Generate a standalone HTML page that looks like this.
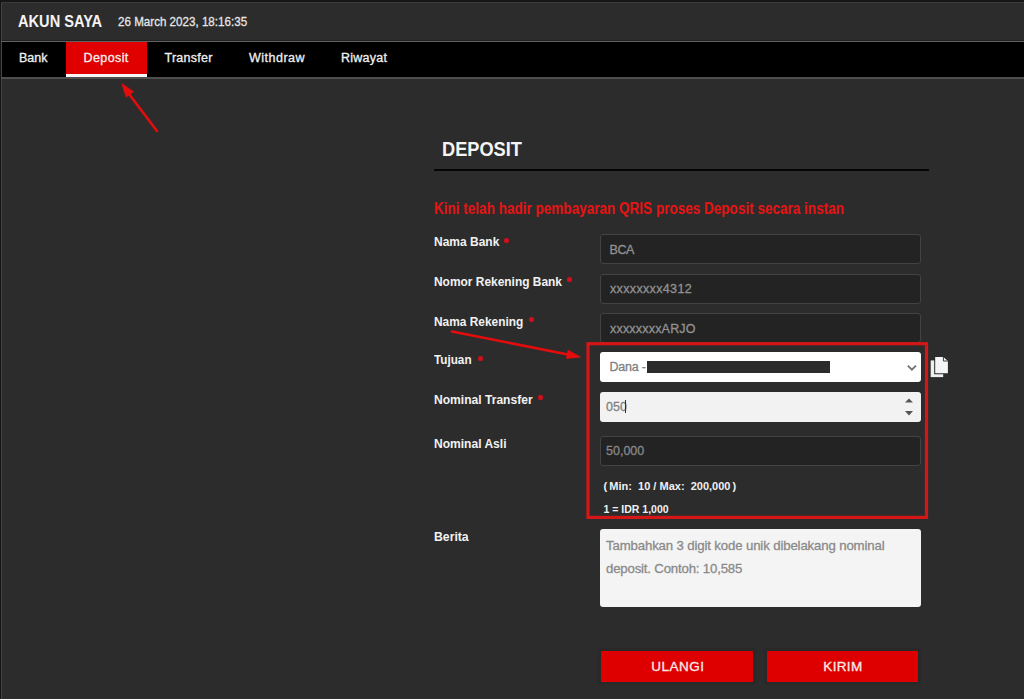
<!DOCTYPE html>
<html><head><meta charset="utf-8"><style>
html,body{margin:0;padding:0;width:1024px;height:699px;overflow:hidden;background:#2c2c2c;}
.t{position:absolute;white-space:pre;line-height:1;font-family:"Liberation Sans",sans-serif;}
.b{position:absolute;}
</style></head><body>
<div class="b" style="left:0px;top:0px;width:1024px;height:2px;background:#161616"></div>
<div class="b" style="left:0px;top:0px;width:1px;height:699px;background:#141414"></div>
<div class="b" style="left:1px;top:2px;width:1px;height:697px;background:#444"></div>
<div class="b" style="left:1px;top:2px;width:1023px;height:1px;background:#3a3a3a"></div>
<div class="t" style="left:18.30px;top:12.73px;font-size:16.5px;font-weight:bold;color:#f4f4f4;letter-spacing:0px;transform:scaleX(0.885);transform-origin:0 0;">AKUN SAYA</div>
<div class="t" style="left:118.00px;top:15.07px;font-size:13.5px;font-weight:normal;color:#e6e6e6;letter-spacing:0px;transform:scaleX(0.86);transform-origin:0 0;-webkit-text-stroke:0.3px #e6e6e6;">26 March 2023, 18:16:35</div>
<div class="b" style="left:2px;top:40px;width:1022px;height:1px;background:#1f1f1f"></div>
<div class="b" style="left:1px;top:41px;width:1023px;height:1px;background:#626262"></div>
<div class="b" style="left:2px;top:42px;width:1022px;height:35px;background:#000"></div>
<div class="b" style="left:66px;top:42px;width:81px;height:32px;background:#e00000"></div>
<div class="b" style="left:66px;top:74px;width:81px;height:3px;background:#f5f5f5"></div>
<div class="b" style="left:1px;top:77px;width:1023px;height:2px;background:#4e4e4e"></div>
<div class="t" style="left:19.00px;top:51.52px;font-size:12.5px;font-weight:normal;color:#f0f0f0;letter-spacing:0px;-webkit-text-stroke:0.3px #f0f0f0;">Bank</div>
<div class="t" style="left:83.50px;top:51.52px;font-size:12.5px;font-weight:normal;color:#f0f0f0;letter-spacing:0.4px;-webkit-text-stroke:0.3px #f0f0f0;">Deposit</div>
<div class="t" style="left:164.50px;top:51.52px;font-size:12.5px;font-weight:normal;color:#f0f0f0;letter-spacing:0.25px;-webkit-text-stroke:0.3px #f0f0f0;">Transfer</div>
<div class="t" style="left:249.00px;top:51.52px;font-size:12.5px;font-weight:normal;color:#f0f0f0;letter-spacing:0.5px;-webkit-text-stroke:0.3px #f0f0f0;">Withdraw</div>
<div class="t" style="left:341.00px;top:51.52px;font-size:12.5px;font-weight:normal;color:#f0f0f0;letter-spacing:0.25px;-webkit-text-stroke:0.3px #f0f0f0;">Riwayat</div>
<svg class="b" style="left:0;top:0" width="1024" height="699">
<g stroke="#e40c0c" stroke-width="2.6" stroke-linecap="round" fill="#e40c0c">
<line x1="157" y1="131" x2="129" y2="94"/>
<polygon points="122,84 126.15,97.12 133.37,91.74" stroke-width="0.8" stroke-linejoin="round"/>
<line x1="452" y1="331.5" x2="568" y2="354.5"/>
<polygon points="580,357 566.47,358.38 568.03,350.54" stroke-width="0.8" stroke-linejoin="round"/>
</g>
</svg>
<div class="t" style="left:441.50px;top:138.97px;font-size:20px;font-weight:bold;color:#f5f5f5;letter-spacing:0px;transform:scaleX(0.91);transform-origin:0 0;">DEPOSIT</div>
<div class="b" style="left:434px;top:169px;width:495px;height:2px;background:#050505"></div>
<div class="t" style="left:434.00px;top:200.76px;font-size:16px;font-weight:bold;color:#e61414;letter-spacing:0px;transform:scaleX(0.846);transform-origin:0 0;">Kini telah hadir pembayaran QRIS proses Deposit secara instan</div>
<div class="t" style="left:433.60px;top:235.29px;font-size:13.6px;font-weight:bold;color:#f2f2f2;letter-spacing:0px;transform:scaleX(0.882);transform-origin:0 0;">Nama Bank</div>
<div class="b" style="left:504.2px;top:237.5px;width:5px;height:5px;border-radius:50%;background:#c8121e;box-shadow:0 0 1px #a01018"></div>
<div class="t" style="left:433.60px;top:274.89px;font-size:13.6px;font-weight:bold;color:#f2f2f2;letter-spacing:0px;transform:scaleX(0.878);transform-origin:0 0;">Nomor Rekening Bank</div>
<div class="b" style="left:567.3px;top:277.09999999999997px;width:5px;height:5px;border-radius:50%;background:#c8121e;box-shadow:0 0 1px #a01018"></div>
<div class="t" style="left:433.60px;top:314.59px;font-size:13.6px;font-weight:bold;color:#f2f2f2;letter-spacing:0px;transform:scaleX(0.875);transform-origin:0 0;">Nama Rekening</div>
<div class="b" style="left:528.5px;top:316.8px;width:5px;height:5px;border-radius:50%;background:#c8121e;box-shadow:0 0 1px #a01018"></div>
<div class="t" style="left:433.60px;top:353.29px;font-size:13.6px;font-weight:bold;color:#f2f2f2;letter-spacing:0px;transform:scaleX(0.862);transform-origin:0 0;">Tujuan</div>
<div class="b" style="left:477.5px;top:355.5px;width:5px;height:5px;border-radius:50%;background:#c8121e;box-shadow:0 0 1px #a01018"></div>
<div class="t" style="left:433.60px;top:392.99px;font-size:13.6px;font-weight:bold;color:#f2f2f2;letter-spacing:0px;transform:scaleX(0.888);transform-origin:0 0;">Nominal Transfer</div>
<div class="b" style="left:538.3px;top:395.2px;width:5px;height:5px;border-radius:50%;background:#c8121e;box-shadow:0 0 1px #a01018"></div>
<div class="t" style="left:433.60px;top:437.09px;font-size:13.6px;font-weight:bold;color:#f2f2f2;letter-spacing:0px;transform:scaleX(0.886);transform-origin:0 0;">Nominal Asli</div>
<div class="t" style="left:433.60px;top:530.29px;font-size:13.6px;font-weight:bold;color:#f2f2f2;letter-spacing:0px;transform:scaleX(0.9);transform-origin:0 0;">Berita</div>
<div class="b" style="left:600px;top:234px;width:321px;height:30px;background:#232323;border:1px solid #434343;box-sizing:border-box;border-radius:3px"></div>
<div class="t" style="left:609.50px;top:243.62px;font-size:12.5px;font-weight:normal;color:#929292;letter-spacing:-0.4px;-webkit-text-stroke:0.3px #929292;">BCA</div>
<div class="b" style="left:600px;top:274px;width:321px;height:30px;background:#232323;border:1px solid #434343;box-sizing:border-box;border-radius:3px"></div>
<div class="t" style="left:610.00px;top:282.92px;font-size:12.5px;font-weight:normal;color:#929292;letter-spacing:0.35px;-webkit-text-stroke:0.3px #929292;">xxxxxxxx4312</div>
<div class="b" style="left:600px;top:313px;width:321px;height:30px;background:#232323;border:1px solid #434343;box-sizing:border-box;border-radius:3px"></div>
<div class="t" style="left:610.00px;top:323.02px;font-size:12.5px;font-weight:normal;color:#929292;letter-spacing:0.2px;-webkit-text-stroke:0.3px #929292;">xxxxxxxxARJO</div>
<div class="b" style="left:600px;top:352px;width:321px;height:30px;background:#fff;border-radius:3px"></div>
<div class="t" style="left:609.50px;top:360.92px;font-size:12.5px;font-weight:normal;color:#808080;letter-spacing:-0.2px;-webkit-text-stroke:0.3px #808080;">Dana -</div>
<div class="b" style="left:647px;top:361px;width:183px;height:11.5px;background:#2b2b2b"></div>
<svg class="b" style="left:906px;top:363.5px" width="12" height="8"><polyline points="1.8,1.6 5.9,5.6 10,1.6" fill="none" stroke="#747474" stroke-width="1.9"/></svg>
<div class="b" style="left:600px;top:392px;width:321px;height:30px;background:#f2f2f2;border-radius:3px"></div>
<div class="t" style="left:606.00px;top:401.02px;font-size:12.5px;font-weight:normal;color:#808080;letter-spacing:0px;-webkit-text-stroke:0.3px #808080;">050</div>
<div class="b" style="left:625px;top:400px;width:1px;height:13px;background:#333"></div>
<svg class="b" style="left:903px;top:396px" width="12" height="22"><polygon points="2,6.5 6,2.5 10,6.5" fill="#555"/><polygon points="2,15 6,19.5 10,15" fill="#555"/></svg>
<svg class="b" style="left:929px;top:355px" width="22" height="24">
<path d="M1.7 5.4 H14.2 V22.1 H1.7 Z" fill="#efefef"/>
<path d="M5.2 0.9 H14.4 L19.9 6 V19.3 H5.2 Z" fill="#2a2a2a"/>
<path d="M6.2 1.9 H14.4 L18.9 6 V18.3 H6.2 Z" fill="#f5f5f5"/>
<path d="M14.4 1.9 V6 H18.9" fill="none" stroke="#3a3a3a" stroke-width="1"/>
</svg>
<div class="b" style="left:600px;top:436px;width:321px;height:30px;background:#232323;border:1px solid #434343;box-sizing:border-box;border-radius:3px"></div>
<div class="t" style="left:606.00px;top:445.32px;font-size:12.5px;font-weight:normal;color:#878787;letter-spacing:0px;-webkit-text-stroke:0.3px #878787;">50,000</div>
<div class="t" style="left:603.50px;top:481.29px;font-size:11px;font-weight:bold;color:#f0f0f0;letter-spacing:0px;">(&thinsp;Min:&nbsp; 10 / Max:&nbsp; 200,000&thinsp;)</div>
<div class="t" style="left:603.50px;top:503.61px;font-size:10.5px;font-weight:bold;color:#f0f0f0;letter-spacing:0px;">1 = IDR 1,000</div>
<div class="b" style="left:600px;top:529px;width:321px;height:78px;background:#f4f4f4;border-radius:3px"></div>
<div class="t" style="left:606.00px;top:539.33px;font-size:13.2px;font-weight:normal;color:#8a8a8a;letter-spacing:-0.13px;-webkit-text-stroke:0.3px #8a8a8a;">Tambahkan 3 digit kode unik dibelakang nominal</div>
<div class="t" style="left:606.00px;top:561.83px;font-size:13.2px;font-weight:normal;color:#8a8a8a;letter-spacing:-0.17px;-webkit-text-stroke:0.3px #8a8a8a;">deposit. Contoh: 10,585</div>
<div class="b" style="left:601px;top:651px;width:152px;height:31px;background:#de0000;border-radius:1px;box-shadow:0 0 0 3px #292929"></div>
<div class="b" style="left:767px;top:651px;width:151px;height:31px;background:#de0000;border-radius:1px;box-shadow:0 0 0 3px #292929"></div>
<div class="t" style="left:651.30px;top:660.47px;font-size:13.5px;font-weight:normal;color:#fbeaea;letter-spacing:0.5px;-webkit-text-stroke:0.3px #fbeaea;">ULANGI</div>
<div class="t" style="left:823.30px;top:660.47px;font-size:13.5px;font-weight:normal;color:#fbeaea;letter-spacing:0.35px;-webkit-text-stroke:0.3px #fbeaea;">KIRIM</div>
<svg class="b" style="left:0;top:0" width="1024" height="699"><g fill="none" stroke="#d41616" stroke-width="3.2">
<rect x="588" y="343.7" width="338.5" height="173.7"/>
</g></svg>

</body></html>
